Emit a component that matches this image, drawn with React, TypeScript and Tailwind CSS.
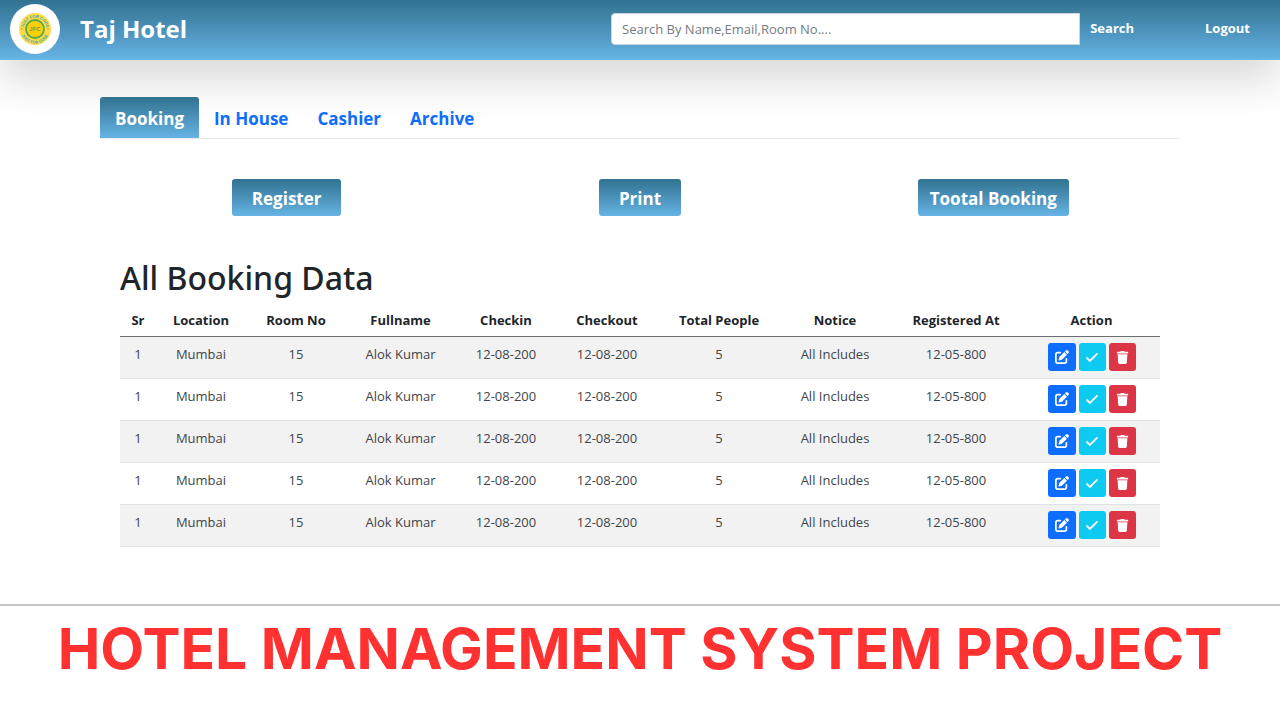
import { FaTrash } from "react-icons/fa";
import { FaPenToSquare } from "react-icons/fa6";

interface Booking {
  sr: number;
  location: string;
  roomNo: number;
  fullname: string;
  checkin: string;
  checkout: string;
  totalPeople: number;
  notice: string;
  registeredAt: string;
}

const booking: Booking = {
  sr: 1,
  location: "Mumbai",
  roomNo: 15,
  fullname: "Alok Kumar",
  checkin: "12-08-200",
  checkout: "12-08-200",
  totalPeople: 5,
  notice: "All Includes",
  registeredAt: "12-05-800",
};

const bookings: Booking[] = Array.from({ length: 5 }, () => booking);

const columns = [
  { label: "Sr", width: "w-[36px]" },
  { label: "Location", width: "w-[90px]" },
  { label: "Room No", width: "w-[100px]" },
  { label: "Fullname", width: "w-[109px]" },
  { label: "Checkin", width: "w-[102px]" },
  { label: "Checkout", width: "w-[100px]" },
  { label: "Total People", width: "w-[124px]" },
  { label: "Notice", width: "w-[108px]" },
  { label: "Registered At", width: "w-[134px]" },
  { label: "Action", width: "w-[137px]" },
];

const tabs = ["Booking", "In House", "Cashier", "Archive"];

function Logo() {
  return (
    <svg viewBox="0 0 50 50" className="size-[50px] shrink-0" role="img" aria-label="JFC">
      <defs>
        <path id="logo-top" d="M13.8 25a11.2 11.2 0 0 1 22.4 0" />
        <path id="logo-bottom" d="M10.4 25a14.6 14.6 0 0 0 29.2 0" />
      </defs>
      <circle cx="25" cy="25" r="25" fill="#fff" />
      <circle cx="25" cy="25" r="16" fill="#fddc4a" />
      <circle cx="25" cy="25" r="9" fill="#fdd00d" stroke="#5aa843" strokeWidth="1.8" />
      <circle cx="12" cy="25" r="1" fill="#f9a63a" />
      <circle cx="38" cy="25" r="1" fill="#f9a63a" />
      <g fill="#35a9b5" fontFamily="Liberation Sans, sans-serif" fontWeight="700" textAnchor="middle">
        <text fontSize="4">
          <textPath href="#logo-top" startOffset="50%">JUST FOR CODE</textPath>
        </text>
        <text fontSize="4">
          <textPath href="#logo-bottom" startOffset="50%">JUST FOR CODE</textPath>
        </text>
        <text x="25" y="27" fontSize="6" fill="#6f9f4a">JFC</text>
      </g>
    </svg>
  );
}

function Header() {
  return (
    <header className="flex h-[60px] items-center bg-linear-to-b from-[#317290] to-[#67b4e6] pr-5 pb-[3px] pl-[10px] text-white shadow-[0_16px_48px_rgba(0,0,0,0.18)]">
      <Logo />
      <h1 className="ml-5 text-2xl font-bold">Taj Hotel</h1>
      <form className="ml-auto flex w-[533px]" onSubmit={(e) => e.preventDefault()}>
        <input
          type="text"
          aria-label="Search bookings"
          placeholder="Search By Name,Email,Room No...."
          className="h-8 min-w-0 flex-1 rounded-l border border-[#ced4da] bg-white px-[10px] text-[13px] text-[#212529] placeholder:text-[#757c83]"
        />
        <button type="submit" className="px-[10px] text-[13px] font-bold">
          Search
        </button>
      </form>
      <button type="button" className="ml-[51px] px-[10px] text-[13px] font-bold">
        Logout
      </button>
    </header>
  );
}

function Tabs() {
  return (
    <nav className="flex gap-px border-b border-[#e6e8ea] text-[17px] font-bold">
      {tabs.map((tab, idx) => (
        <a
          key={tab}
          href="#"
          className={
            idx === 0
              ? "rounded-t-[3px] bg-linear-to-b from-[#317290] to-[#67b4e6] px-[15px] pt-[10px] pb-[7px] leading-6 text-white"
              : "px-[14px] pt-[10px] pb-[7px] leading-6 text-[#0d6efd]"
          }
        >
          {tab}
        </a>
      ))}
    </nav>
  );
}

function ActionBar() {
  const button =
    "h-[37px] rounded-[3px] bg-linear-to-b from-[#317290] to-[#67b4e6] pt-[2px] text-[17px] font-bold text-white";

  return (
    <div className="mt-10 grid grid-cols-3 justify-items-center px-[10px]">
      <button type="button" className={`${button} px-5`}>Register</button>
      <button type="button" className={`${button} px-5`}>Print</button>
      <button type="button" className={`${button} px-3`}>Tootal Booking</button>
    </div>
  );
}

function RowActions() {
  const button = "flex h-7 items-center justify-center rounded-[3px] text-white";

  return (
    <div className="flex justify-center gap-[3px]">
      <button type="button" aria-label="Edit" className={`${button} w-7 bg-[#0d6efd]`}>
        <FaPenToSquare size={14} />
      </button>
      <button type="button" aria-label="Check out" className={`${button} w-[27px] bg-[#0dcaf0]`}>
        <svg viewBox="0 0 14 14" className="size-[14px]" fill="none" stroke="currentColor" strokeWidth="1.8">
          <path d="M1.5 7.5l3.4 3.4L12.5 3.3" />
        </svg>
      </button>
      <button type="button" aria-label="Delete" className={`${button} w-[27px] bg-[#dc3545]`}>
        <FaTrash size={13} />
      </button>
    </div>
  );
}

function BookingTable() {
  return (
    <table className="w-full table-fixed border-collapse text-center text-[13px] leading-5 text-[#414549]">
      <thead>
        <tr className="border-b border-[#6c6f72] text-[#212529]">
          {columns.map((col) => (
            <th key={col.label} className={`${col.width} py-[6px] font-bold whitespace-nowrap`}>
              {col.label}
            </th>
          ))}
        </tr>
      </thead>
      <tbody>
        {bookings.map((row, idx) => (
          <tr key={idx} className="h-[42px] border-b border-[#dee2e6] align-top odd:bg-[#f2f2f2]">
            {Object.values(row).map((value, i) => (
              <td key={i} className="pt-[7px] whitespace-nowrap">
                {value}
              </td>
            ))}
            <td className="pt-[6px]">
              <RowActions />
            </td>
          </tr>
        ))}
      </tbody>
    </table>
  );
}

export default function App() {
  return (
    <div className="bg-white font-['Open_Sans','Noto_Sans',sans-serif] text-[#212529]">
      <Header />
      <main className="px-[100px] pt-[37px]">
        <Tabs />
        <ActionBar />
        <section className="mt-10 px-5">
          <h2 className="pb-1 font-['Noto_Sans',sans-serif] text-[32px] leading-[44px] font-medium">
            All Booking Data
          </h2>
          <BookingTable />
        </section>
      </main>
      <footer className="mt-[57px] border-t-2 border-[#c8c8c8] pt-[7px] text-center">
        <p className="font-['Inter',sans-serif] text-[57px] leading-[72px] font-bold whitespace-nowrap text-[#ff3131]">
          HOTEL MANAGEMENT SYSTEM PROJECT
        </p>
      </footer>
    </div>
  );
}
